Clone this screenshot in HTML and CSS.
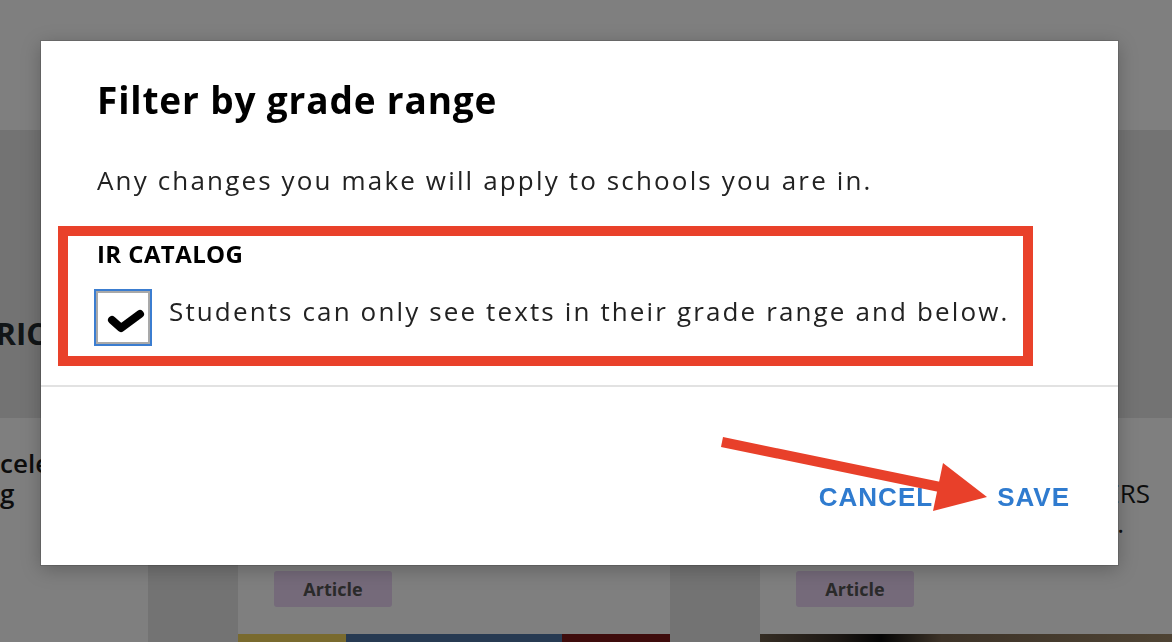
FILE: index.html
```html
<!DOCTYPE html>
<html lang="en">
<head>
  <meta charset="UTF-8">
  <meta name="viewport" content="width=device-width, initial-scale=1.0">
  <title>Filter by grade range</title>
  <link rel="stylesheet" href="styles.css">
</head>
<body>

<div class="page">
  <header class="topbar"></header>
  <main class="content">
    <div class="section-head">
      <h1 class="section-title">HISTORIC</h1>
    </div>
    <div class="cards">
      <article class="card card-cut">
        <h3 class="card-title">celerating<br>g</h3>
      </article>
      <article class="card">
        <h3 class="card-title"></h3>
        <span class="tag">Article</span>
        <div class="card-media">
          <span class="bar bar-yellow"></span>
          <span class="bar bar-blue"></span>
          <span class="bar bar-red"></span>
        </div>
      </article>
      <article class="card">
        <h3 class="card-title card-title-light">
          <span class="line line-first">Poems</span>
          <span class="line">for YOUNG READERS</span>
          <span class="line line-last">and writers.</span>
        </h3>
        <span class="tag">Article</span>
        <div class="card-media card-photo"></div>
      </article>
    </div>
  </main>
</div>

<div class="overlay"></div>

<div class="modal">
  <div class="modal-body">
    <h2 class="modal-title">Filter by grade range</h2>
    <p class="modal-text">Any changes you make will apply to schools you are in.</p>
    <section class="catalog">
      <h3 class="catalog-title">IR CATALOG</h3>
      <label class="check-row">
        <span class="checkbox">
          <svg width="54" height="53" viewBox="0 0 54 53">
            <polyline points="16,29 25,37 44,23" fill="none" stroke="#000" stroke-width="8" stroke-linecap="round" stroke-linejoin="round"/>
          </svg>
        </span>
        <span class="check-label">Students can only see texts in their grade range and below.</span>
      </label>
    </section>
  </div>
  <div class="modal-footer">
    <button class="btn">CANCEL</button>
    <button class="btn">SAVE</button>
  </div>
  <svg class="arrow" width="300" height="110" viewBox="0 0 300 110">
    <line x1="22" y1="22" x2="240" y2="67" stroke="#e8402a" stroke-width="10"/>
    <polygon points="243,43 287,77 233,91" fill="#e8402a"/>
  </svg>
</div>

</body>
</html>
```

FILE: styles.css
```css
body {
  margin: 0;
  font-family: "Open Sans", sans-serif;
  color: #222;
  background: #e6e6e6;
  overflow: hidden;
}
.page {
  height: 642px;
  overflow: hidden;
}
.topbar {
  height: 130px;
  background: #fff;
}
.section-head {
  height: 288px;
}
.section-title {
  width: 46px;
  margin: 0;
  padding-top: 185px;
  display: flex;
  justify-content: flex-end;
  white-space: nowrap;
  font-size: 31px;
  line-height: 36px;
  font-weight: 700;
  color: #222a2e;
}
.cards {
  display: grid;
  grid-template-columns: 148px 432px 432px;
  gap: 90px;
}
.card {
  background: #fff;
  padding: 0 36px;
  display: flex;
  flex-direction: column;
  align-items: flex-start;
  overflow: hidden;
}
.card > * {
  flex-shrink: 0;
}
.card-cut {
  padding: 0;
}
.card-title {
  height: 123px;
  margin: 0;
  padding-top: 30px;
  font-size: 26px;
  line-height: 30px;
  font-weight: 600;
  color: #1a1a1a;
  white-space: nowrap;
}
.card-title-light {
  align-self: stretch;
  font-weight: 400;
}
.line {
  display: block;
  text-align: right;
  margin-right: 6px;
}
.line-first {
  text-align: left;
}
.line-last {
  margin-right: 32px;
}
.tag {
  width: 118px;
  height: 36px;
  line-height: 36px;
  text-align: center;
  border-radius: 3px;
  background: #ead4f4;
  font-size: 18px;
  font-weight: 700;
  color: #555;
}
.card-media {
  display: flex;
  margin: 27px -36px 0;
  height: 60px;
  align-self: stretch;
}
.bar {
  height: 100%;
}
.bar-yellow {
  width: 108px;
  background: #f2d45c;
}
.bar-blue {
  width: 216px;
  background: #4f74a4;
}
.bar-red {
  width: 108px;
  background: #7c1818;
}
.card-photo {
  background: linear-gradient(90deg, #6a5a48 0%, #3a3028 18%, #0a0a0a 28%, #7a6650 42%, #a08a6a 100%);
}
.overlay {
  position: fixed;
  inset: 0;
  background: rgba(0, 0, 0, 0.5);
}
.modal {
  position: absolute;
  left: 41px;
  top: 41px;
  width: 1077px;
  height: 524px;
  background: #fff;
  box-shadow: 0 0 0 1px rgba(0, 0, 0, 0.12), 0 4px 18px rgba(0, 0, 0, 0.25);
}
.modal-body {
  padding: 37px 56px 0;
}
.modal-title {
  margin: 0;
  font-size: 37px;
  line-height: 44px;
  font-weight: 700;
  letter-spacing: 0.85px;
  color: #000;
}
.modal-text {
  margin: 42px 0 0;
  font-size: 26px;
  line-height: 32px;
  letter-spacing: 2.15px;
  white-space: nowrap;
}
.catalog {
  box-sizing: border-box;
  width: 975px;
  margin: 30px 0 0 -39px;
  padding: 4px 0 10px 29px;
  border: 10px solid #e9412a;
}
.catalog-title {
  margin: 0;
  font-size: 24px;
  line-height: 28px;
  font-weight: 700;
  letter-spacing: 0.4px;
  color: #000;
}
.check-row {
  display: flex;
  align-items: flex-start;
  gap: 17px;
  margin-top: 21px;
  margin-left: -3px;
}
.checkbox {
  flex-shrink: 0;
  box-sizing: border-box;
  width: 58px;
  height: 57px;
  border: 2px solid #3b7dd0;
  box-shadow: inset 0 0 0 2px #a9a9a9;
  background: #fff;
}
.checkbox svg {
  display: block;
}
.check-label {
  margin-top: 6px;
  font-size: 26px;
  line-height: 32px;
  letter-spacing: 2.13px;
  white-space: nowrap;
}
.modal-footer {
  margin-top: 19px;
  border-top: 2px solid #e2e2e2;
  padding: 95px 48px 0 0;
  display: flex;
  justify-content: flex-end;
  gap: 64px;
}
.btn {
  padding: 0;
  border: 0;
  background: none;
  font-family: "Liberation Sans", Arial, sans-serif;
  font-size: 26px;
  line-height: 30px;
  font-weight: 700;
  letter-spacing: 1px;
  color: #2f7bcf;
}
.arrow {
  position: absolute;
  left: 659px;
  top: 379px;
}
```
